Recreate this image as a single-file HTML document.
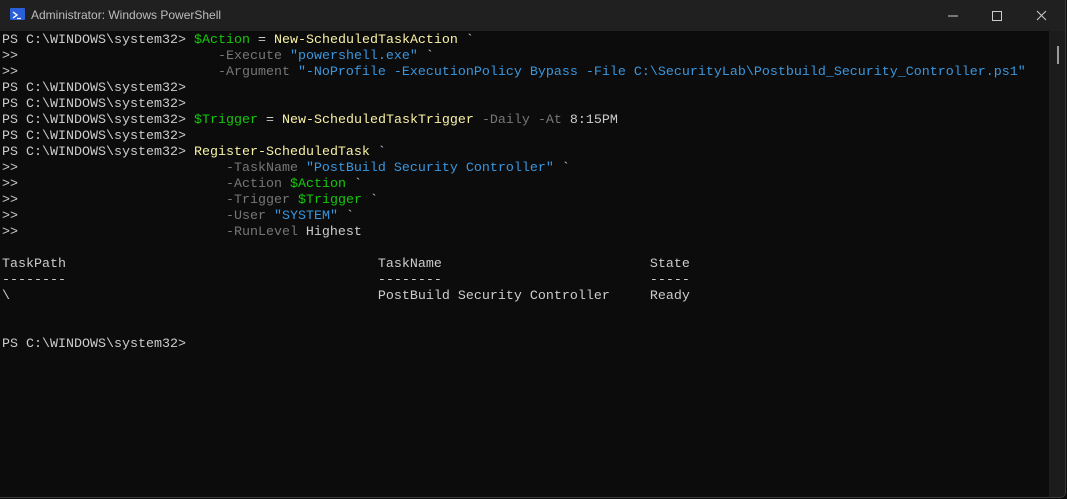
<!DOCTYPE html>
<html><head><meta charset="utf-8"><style>
html,body{margin:0;padding:0;width:1067px;height:499px;overflow:hidden;background:#0c0c0c}
.win{position:absolute;left:0;top:0;width:1065px;height:497px;background:#0c0c0c;border-right:1px solid #3a3a3a;border-bottom:1px solid #3a3a3a;border-radius:0 0 6px 0;overflow:hidden}
.tb{position:absolute;left:0;top:0;width:1067px;height:31px;background:#202020}
.title{position:absolute;left:31px;top:8px;font:12px "Liberation Sans",sans-serif;color:#bdbdbd}
.ico{position:absolute;left:10px;top:8px;width:15px;height:12px;background:#2b5fd9;border-radius:1px}
.sb{position:absolute;left:1049px;top:31px;width:18px;height:468px;background:#1c1c1c}
.thumb{position:absolute;left:1057px;top:46px;width:2px;height:18px;background:#9a9a9a}
pre{position:absolute;left:2px;top:33px;margin:0;font-family:"Liberation Mono",monospace;font-size:13.33px;line-height:16px;color:#cccccc}
.y{color:#f9f1a5}.g{color:#16c60c}.b{color:#3a96dd}.d{color:#767676}
</style></head><body><div class="win">
<div class="tb">
<div class="ico"><svg width="15" height="12" viewBox="0 0 15 12"><path d="M3 3 L7 6 L3 9" stroke="#fff" stroke-width="1.4" fill="none"/><path d="M7 9.5 H11" stroke="#fff" stroke-width="1.2"/></svg></div>
<div class="title">Administrator: Windows PowerShell</div>
<svg style="position:absolute;left:940px;top:9px" width="120" height="14"><path d="M8 7 H18" stroke="#ccc" stroke-width="1"/><rect x="52.5" y="2.5" width="9" height="9" fill="none" stroke="#ccc"/><path d="M97 2 L106 11 M106 2 L97 11" stroke="#ccc" stroke-width="1"/></svg>
</div>
<div class="sb"></div><div class="thumb"></div>
<pre>PS C:\WINDOWS\system32&gt; <span class="g">$Action</span> = <span class="y">New-ScheduledTaskAction</span> `
&gt;&gt;                         <span class="d">-Execute</span> <span class="b">"powershell.exe"</span> `
&gt;&gt;                         <span class="d">-Argument</span> <span class="b">"-NoProfile -ExecutionPolicy Bypass -File C:\SecurityLab\Postbuild_Security_Controller.ps1"</span>
PS C:\WINDOWS\system32&gt;
PS C:\WINDOWS\system32&gt;
PS C:\WINDOWS\system32&gt; <span class="g">$Trigger</span> = <span class="y">New-ScheduledTaskTrigger</span> <span class="d">-Daily</span> <span class="d">-At</span> 8:15PM
PS C:\WINDOWS\system32&gt;
PS C:\WINDOWS\system32&gt; <span class="y">Register-ScheduledTask</span> `
&gt;&gt;                          <span class="d">-TaskName</span> <span class="b">"PostBuild Security Controller"</span> `
&gt;&gt;                          <span class="d">-Action</span> <span class="g">$Action</span> `
&gt;&gt;                          <span class="d">-Trigger</span> <span class="g">$Trigger</span> `
&gt;&gt;                          <span class="d">-User</span> <span class="b">"SYSTEM"</span> `
&gt;&gt;                          <span class="d">-RunLevel</span> Highest

TaskPath                                       TaskName                          State
--------                                       --------                          -----
\                                              PostBuild Security Controller     Ready


PS C:\WINDOWS\system32&gt;</pre>
</div></body></html>
